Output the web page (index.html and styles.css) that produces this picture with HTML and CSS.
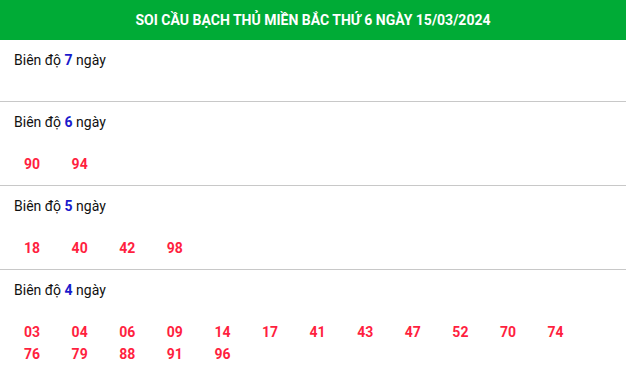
FILE: index.html
```html
<!DOCTYPE html>
<html lang="vi">
<head>
<meta charset="utf-8">
<title>Soi cầu bạch thủ</title>
<link rel="stylesheet" href="styles.css">
</head>
<body>
<div class="box">
  <h2 class="head">SOI CẦU BẠCH THỦ MIỀN BẮC THỨ 6 NGÀY 15/03/2024</h2>
  <section class="sec">
    <div class="lbl">Biên độ <b>7</b> ngày</div>
    <div class="nums"></div>
  </section>
  <section class="sec">
    <div class="lbl">Biên độ <b>6</b> ngày</div>
    <div class="nums"><span>90</span><span>94</span></div>
  </section>
  <section class="sec">
    <div class="lbl">Biên độ <b>5</b> ngày</div>
    <div class="nums"><span>18</span><span>40</span><span>42</span><span>98</span></div>
  </section>
  <section class="sec">
    <div class="lbl">Biên độ <b>4</b> ngày</div>
    <div class="nums"><span>03</span><span>04</span><span>06</span><span>09</span><span>14</span><span>17</span><span>41</span><span>43</span><span>47</span><span>52</span><span>70</span><span>74</span><span>76</span><span>79</span><span>88</span><span>91</span><span>96</span></div>
  </section>
</div>
</body>
</html>
```
FILE: styles.css
```css
html, body {
  margin: 0;
  padding: 0;
  background: #fff;
}
body {
  font-family: Roboto, "Liberation Sans", sans-serif;
  color: #111;
}
.box {
  width: 626px;
}
.head {
  margin: 0;
  height: 40px;
  background: #00ab36;
  color: #fff;
  font-size: 14px;
  font-weight: 700;
  line-height: 40px;
  text-align: center;
}
.sec {
  padding: 10px 0 10px 14px;
  border-bottom: 1px solid #c8c8c8;
}
.lbl {
  font-size: 14px;
  line-height: 20px;
}
.lbl b {
  color: #1a1acc;
  font-weight: 700;
}
.nums {
  margin-top: 21px;
  padding-left: 10px;
  display: grid;
  grid-template-columns: repeat(12, 47.6px);
  font-size: 14px;
  font-weight: 700;
  line-height: 22px;
  color: #ff1f3f;
}
```
